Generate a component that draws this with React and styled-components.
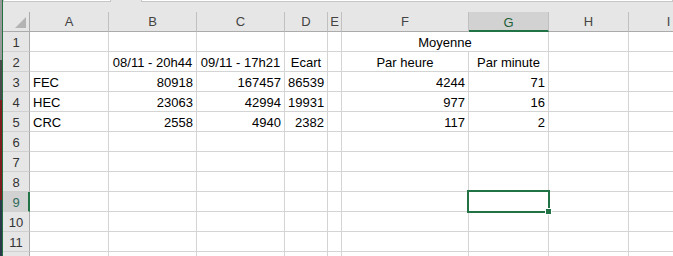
import React from "react";
import styled, { createGlobalStyle } from "styled-components";

const GlobalStyle = createGlobalStyle`
  html, body {
    margin: 0;
    padding: 0;
    background: #ffffff;
    overflow: hidden;
  }
  body {
    font-family: "Liberation Sans", Arial, sans-serif;
  }
`;

const Window = styled.div`
  display: flex;
  width: 673px;
  height: 256px;
  overflow: hidden;
  background: #e6e6e6;
`;

const EdgeStrip = styled.div`
  flex: 0 0 2px;
  background: linear-gradient(#9a9a9a 0 60px, #4a4a4a 60px 100px, #7a1e1e 100px 200px, #2a3a4a 200px);
  border-right: 1px solid #217346;
`;

const Main = styled.div`
  flex: 1;
  display: flex;
  flex-direction: column;
  min-width: 0;
`;

const TopStrip = styled.div`
  flex: 0 0 12px;
  display: flex;
  gap: 30px;
  background: #e6e6e6;
`;

const BarEdge = styled.div`
  height: 1px;
  background: #ffffff;
  border: 1px solid #c6c6c6;
  border-top: none;
  width: ${(p) => p.$w};
  flex: ${(p) => (p.$grow ? 1 : "none")};
`;

const Grid = styled.div`
  display: grid;
  grid-template-columns: 27px 79px 88px 88px 43px 14px 127px 80px 80px 80px;
  grid-auto-rows: 20px;
  background: #ffffff;
  width: max-content;
`;

const Corner = styled.div`
  background: #e6e6e6;
  border-right: 1px solid #ababab;
  border-bottom: 1px solid #ababab;
  display: flex;
  align-items: flex-end;
  justify-content: flex-end;
  padding: 0 3px 3px 0;
  box-sizing: border-box;
`;

const ColHead = styled.div`
  box-sizing: border-box;
  background: ${(p) => (p.$active ? "#d2d2d2" : "#e6e6e6")};
  border-right: 1px solid #c0c0c0;
  border-bottom: ${(p) => (p.$active ? "2px solid #217346" : "1px solid #ababab")};
  color: ${(p) => (p.$active ? "#1d5e38" : "#444444")};
  font-size: 13px;
  text-align: center;
  line-height: 19px;
  padding-top: ${(p) => (p.$active ? "1px" : "0")};
  overflow: hidden;
  white-space: nowrap;
`;

const RowHead = styled.div`
  box-sizing: border-box;
  background: ${(p) => (p.$active ? "#d2d2d2" : "#e6e6e6")};
  border-right: ${(p) => (p.$active ? "2px solid #217346" : "1px solid #ababab")};
  border-bottom: 1px solid #d0d0d0;
  color: ${(p) => (p.$active ? "#2f6b5a" : "#333333")};
  font-size: 13px;
  text-align: center;
  padding-top: 2px;
  padding-left: ${(p) => (p.$active ? "1px" : "0")};
  line-height: 17px;
`;

const Cell = styled.div`
  position: relative;
  box-sizing: border-box;
  border-right: 1px solid #d4d4d4;
  border-bottom: 1px solid #d4d4d4;
  font-size: 13px;
  color: #000000;
  line-height: 17px;
  padding: 2px 3px 0;
  text-align: ${(p) => p.$align || "left"};
  white-space: nowrap;
  grid-column: ${(p) => (p.$span ? `span ${p.$span}` : "auto")};
`;

const Selection = styled.div`
  position: absolute;
  left: -2px;
  top: -2px;
  width: 83px;
  height: 23px;
  box-sizing: border-box;
  border: 2px solid #217346;
  pointer-events: none;
  z-index: 2;
`;

const Handle = styled.div`
  position: absolute;
  left: 76px;
  top: 16px;
  width: 5px;
  height: 5px;
  background: #217346;
  border: 1px solid #ffffff;
  z-index: 3;
`;

const columns = ["A", "B", "C", "D", "E", "F", "G", "H", "I"];

const rows = {
  2: [
    null,
    { text: "08/11 - 20h44", align: "center" },
    { text: "09/11 - 17h21", align: "center" },
    { text: "Ecart", align: "center" },
    null,
    { text: "Par heure", align: "center" },
    { text: "Par minute", align: "center" },
    null,
    null,
  ],
  3: ["FEC", 80918, 167457, 86539, null, 4244, 71, null, null],
  4: ["HEC", 23063, 42994, 19931, null, 977, 16, null, null],
  5: ["CRC", 2558, 4940, 2382, null, 117, 2, null, null],
};

const renderRow = (n) => {
  const data = rows[n];
  const cells = [];
  if (n === 1) {
    // F1:G1 merged
    cells.push(<Cell key="a" />, <Cell key="b" />, <Cell key="c" />, <Cell key="d" />, <Cell key="e" />);
    cells.push(
      <Cell key="fg" $span={2} $align="center">
        Moyenne
      </Cell>
    );
    cells.push(<Cell key="h" />, <Cell key="i" />);
    return cells;
  }
  columns.forEach((col, i) => {
    const v = data ? data[i] : null;
    const selected = n === 9 && col === "G";
    if (v === null || v === undefined) {
      cells.push(
        <Cell key={col}>
          {selected && (
            <>
              <Selection />
              <Handle />
            </>
          )}
        </Cell>
      );
    } else if (typeof v === "number") {
      cells.push(
        <Cell key={col} $align="right">
          {v}
        </Cell>
      );
    } else if (typeof v === "string") {
      cells.push(<Cell key={col}>{v}</Cell>);
    } else {
      cells.push(
        <Cell key={col} $align={v.align}>
          {v.text}
        </Cell>
      );
    }
  });
  return cells;
};

export default function App() {
  const rowNumbers = Array.from({ length: 12 }, (_, i) => i + 1);
  return (
    <>
      <GlobalStyle />
      <Window>
        <EdgeStrip />
        <Main>
          <TopStrip>
            <BarEdge $w="106px" />
            <BarEdge $grow />
          </TopStrip>
          <Grid>
            <Corner>
              <svg width="11" height="11" viewBox="0 0 11 11">
                <polygon points="11,0 11,11 0,11" fill="#b4b4b4" />
              </svg>
            </Corner>
            {columns.map((c) => (
              <ColHead key={c} $active={c === "G"}>
                {c}
              </ColHead>
            ))}
            {rowNumbers.map((n) => (
              <React.Fragment key={n}>
                {/* row 12 is only a sliver at the bottom, its number is not visible */}
                <RowHead $active={n === 9}>{n < 12 ? n : ""}</RowHead>
                {renderRow(n)}
              </React.Fragment>
            ))}
          </Grid>
        </Main>
      </Window>
    </>
  );
}
